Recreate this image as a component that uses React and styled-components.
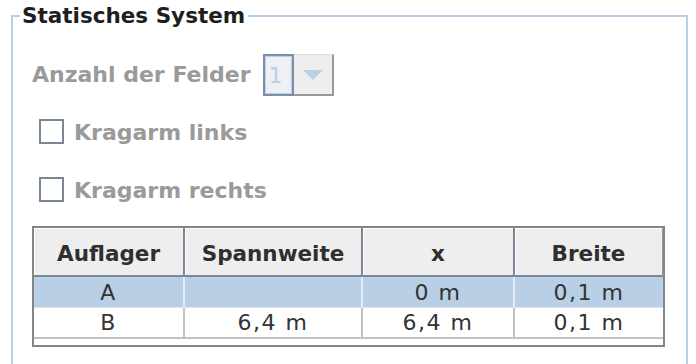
import React from 'react';
import styled, { createGlobalStyle } from 'styled-components';

const GlobalStyle = createGlobalStyle`
  html, body {
    margin: 0;
    padding: 0;
    background: #ffffff;
    overflow: hidden;
  }
  body {
    font-family: "DejaVu Sans", "Liberation Sans", sans-serif;
  }
`;

const rows = [
  { name: 'A', span: '', x: '0 m', width: '0,1 m', selected: true },
  { name: 'B', span: '6,4 m', x: '6,4 m', width: '0,1 m', selected: false },
];

const columns = ['Auflager', 'Spannweite', 'x', 'Breite'];

export default function App() {
  return (
    <>
      <GlobalStyle />
      <Page>
        <Panel>
          <Legend>Statisches System</Legend>
          <Content>
            <FieldRow>
              <Label $shift={-2}>Anzahl der Felder</Label>
              <Combo>
                <ComboText>1</ComboText>
                <ComboButton>
                  <svg width="22" height="12" viewBox="0 0 22 12">
                    <path d="M1 1 H21 L11 11 Z" fill="#b9cfe6" />
                  </svg>
                </ComboButton>
              </Combo>
            </FieldRow>
            <CheckRow $top={23}>
              <Box />
              <Label $shift={2}>Kragarm links</Label>
            </CheckRow>
            <CheckRow $top={33}>
              <Box />
              <Label $shift={2}>Kragarm rechts</Label>
            </CheckRow>
            <Table>
              <HeadRow>
                {columns.map((c, i) => (
                  <HeadCell key={c} $last={i === columns.length - 1}>
                    {c}
                  </HeadCell>
                ))}
              </HeadRow>
              {rows.map((r) => (
                <BodyRow key={r.name} $selected={r.selected}>
                  <Cell $selected={r.selected}>{r.name}</Cell>
                  <Cell $selected={r.selected}>{r.span}</Cell>
                  <Cell $selected={r.selected}>{r.x}</Cell>
                  <Cell $selected={r.selected} $last>
                    {r.width}
                  </Cell>
                </BodyRow>
              ))}
              <Filler />
            </Table>
          </Content>
        </Panel>
      </Page>
    </>
  );
}

const Page = styled.div`
  width: 696px;
  height: 364px;
  padding: 3px 8px 0 11px;
  box-sizing: border-box;
`;

const Panel = styled.fieldset`
  margin: 0;
  padding: 0;
  height: 420px;
  box-sizing: border-box;
  border: 2px solid #b9cfe6;
  min-width: 0;
`;

const Legend = styled.legend`
  margin-left: 7px;
  padding: 0 3px 0 2px;
  font-size: 21.5px;
  line-height: 26px;
  font-weight: bold;
  color: #1e1e1e;
`;

const Content = styled.div`
  display: flex;
  flex-direction: column;
  align-items: flex-start;
  padding-left: 19px;
`;

const FieldRow = styled.div`
  display: flex;
  align-items: center;
  gap: 12px;
  margin-top: 25px;
  height: 42px;
`;

const Label = styled.span`
  font-size: 22px;
  font-weight: bold;
  color: #9a9a9a;
  white-space: nowrap;
  margin-top: ${(p) => p.$shift}px;
`;

const Combo = styled.div`
  display: flex;
  height: 42px;
`;

const ComboText = styled.div`
  width: 31px;
  box-sizing: border-box;
  border: 2px solid #7d8fa8;
  box-shadow: inset 0 0 0 1px #b9cfe6;
  background: #eef0f3;
  color: #b9cfe6;
  font-size: 22px;
  display: flex;
  align-items: center;
  padding-left: 4px;
`;

const ComboButton = styled.div`
  width: 40px;
  box-sizing: border-box;
  background: #eeeeee;
  border-right: 2px solid #999999;
  border-bottom: 2px solid #999999;
  border-top: 1px solid #dddddd;
  display: flex;
  align-items: center;
  justify-content: center;
`;

const CheckRow = styled.div`
  display: flex;
  align-items: center;
  gap: 10px;
  margin-top: ${(p) => p.$top}px;
  padding-left: 7px;
  height: 25px;
`;

const Box = styled.div`
  width: 25px;
  height: 25px;
  box-sizing: border-box;
  border: 2px solid #7b8695;
  background: #ffffff;
`;

const Table = styled.div`
  margin-top: 24px;
  width: 633px;
  height: 121px;
  box-sizing: border-box;
  border: 2px solid #858585;
  display: flex;
  flex-direction: column;
`;

const grid = `
  display: grid;
  grid-template-columns: 151px 178px 152px 148px;
`;

const HeadRow = styled.div`
  ${grid}
  height: 49px;
`;

const HeadCell = styled.div`
  background: #eeeeee;
  border-bottom: 2px solid #7c8797;
  border-right: ${(p) => (p.$last ? '1px solid #9a9a9a' : '2px solid #7c8797')};
  box-shadow: inset 1px 1px 0 #ffffff;
  display: flex;
  align-items: center;
  justify-content: center;
  padding-top: 3px;
  font-size: 21.5px;
  font-weight: bold;
  color: #2f2f2f;
`;

const BodyRow = styled.div`
  ${grid}
  height: 31px;
  background: ${(p) => (p.$selected ? '#b9cfe6' : '#ffffff')};
  border-bottom: ${(p) => (p.$selected ? '1px solid #dbe5f0' : '2px solid #c2c2c2')};
  box-sizing: border-box;
`;

const Cell = styled.div`
  border-right: ${(p) =>
    p.$last ? 'none' : p.$selected ? '2px solid #e6edf5' : '2px solid #c2c2c2'};
  display: flex;
  align-items: center;
  justify-content: center;
  font-size: 22px;
  letter-spacing: 1.5px;
  color: #333333;
`;

const Filler = styled.div`
  flex: 1;
  background: #ffffff;
`;
